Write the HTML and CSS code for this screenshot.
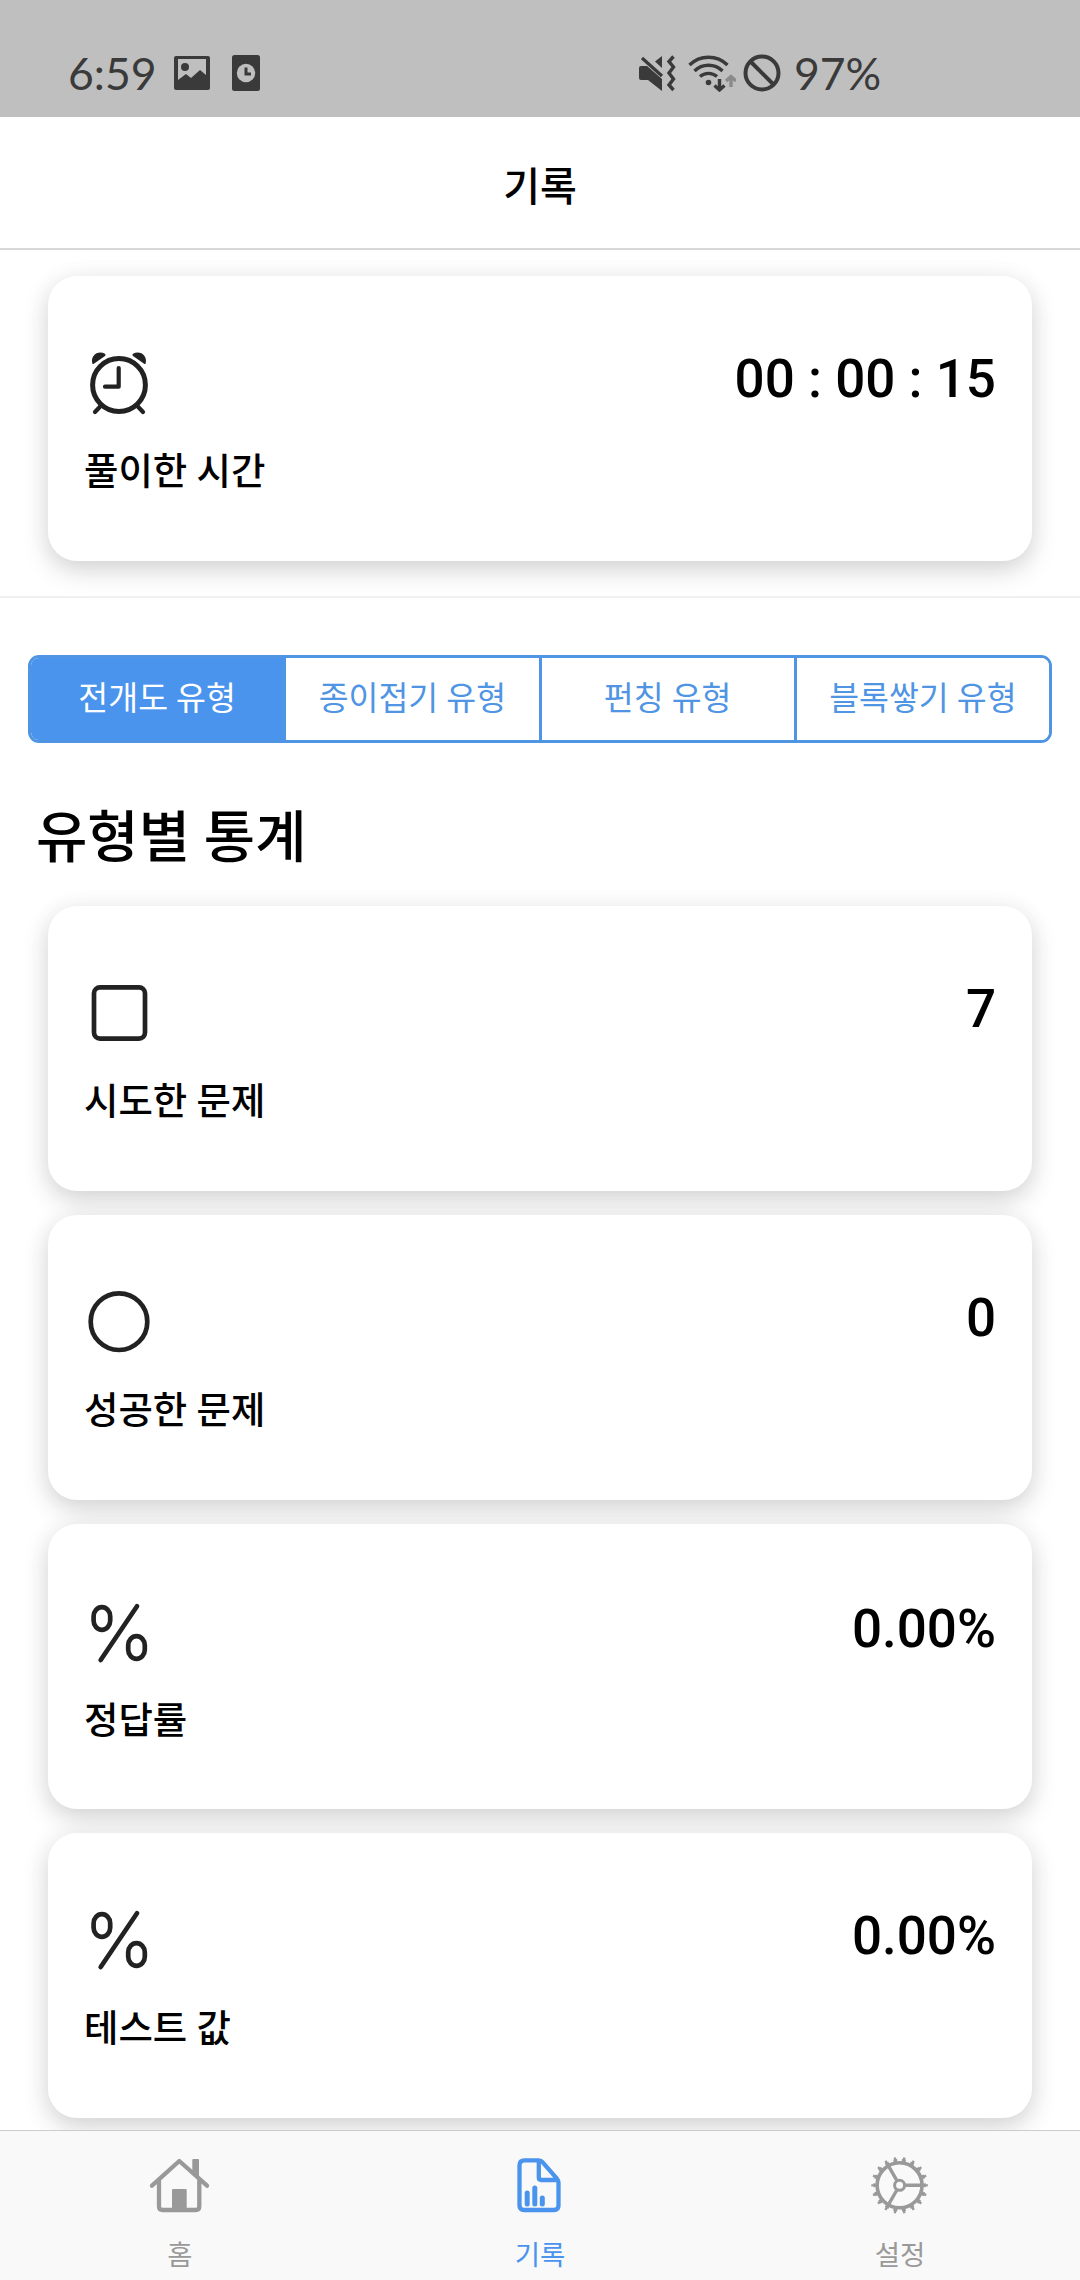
FILE: index.html
```html
<!DOCTYPE html>
<html lang="ko">
<head>
<meta charset="utf-8">
<title>기록</title>
<link rel="stylesheet" href="styles.css">
</head>
<body>
<div class="screen">
  <div class="status">
    <div class="status-left">
      <span class="clock">6:59</span>
      <svg class="photo" width="36" height="34" viewBox="0 0 36 34"><path fill="#3a3a3a" fill-rule="evenodd" d="M2 0h32a2 2 0 0 1 2 2v30a2 2 0 0 1-2 2H2a2 2 0 0 1-2-2V2a2 2 0 0 1 2-2zM4 3v21l8-6 5 4 9-8 6 5V3z"/><circle cx="11" cy="11" r="4" fill="#3a3a3a"/></svg>
      <svg class="alarm" width="28" height="36" viewBox="0 0 28 36"><rect width="28" height="36" rx="2.5" fill="#3a3a3a"/><circle cx="14" cy="18" r="9.2" fill="#bfbfbf"/><path d="M14 12.500v6.500h5" fill="none" stroke="#3a3a3a" stroke-width="3"/></svg>
    </div>
    <div class="status-right">
      <svg width="37" height="38" viewBox="0 0 37 38" fill="#3a3a3a"><path d="M2 12h6l15 13v12L9 26H2a2 2 0 0 1-2-2V14a2 2 0 0 1 2-2zM23 2v12l-7-6.500z"/><path d="M3 4l20 18" stroke="#3a3a3a" stroke-width="3.200"/><path d="M34.500 2.500l-4.500 5 4.500 5.500-4.500 6 4.500 6-4.500 6 4.500 5" fill="none" stroke="#3a3a3a" stroke-width="3.400"/></svg>
      <svg class="wifi" width="48" height="38" viewBox="0 0 48 38" fill="none" stroke="#3a3a3a" stroke-width="3.400"><path d="M1.500 11a27 27 0 0 1 38 0M6.500 17a20 20 0 0 1 28 0M12 22.500a13 13 0 0 1 17 0"/><circle cx="20.500" cy="28.500" r="2.800" fill="#3a3a3a" stroke="none"/><path d="M31.500 25v11M26.500 31.500l5 4.500 5-4.500"/><path stroke="#8a8a8a" d="M43 33V22.500M38 27l5-4.500 5 4.500"/></svg>
      <svg class="block" width="38" height="38" viewBox="0 0 38 38" fill="none" stroke="#3a3a3a" stroke-width="4"><circle cx="19" cy="19" r="16.500"/><path d="M7.500 7.500l23 23"/></svg>
      <span class="battery">97%</span>
    </div>
  </div>
  <header class="header"><h1>기록</h1></header>

  <main class="content">
    <section class="total">
      <article class="card">
        <div class="card-row">
          <svg class="icon" viewBox="0 0 70 70"><circle cx="35" cy="37" r="26.400" stroke-width="5"/><path stroke-width="4.200" d="M34.700 20v18.700H21M16.700 58 11 64M53.300 58l5.700 6"/><path class="solid" d="M8.300 15.200C6.500 8 13.500 2 21 5.800q1.300 1.200 0 2.200L9.500 16q-1 .3-1.200-.8zM61.700 15.200C63.500 8 56.500 2 49 5.800q-1.300 1.200 0 2.200l11.500 8q1 .3 1.200-.8z"/></svg>
          <span class="value">00 : 00 : 15</span>
        </div>
        <p class="label">풀이한 시간</p>
      </article>
    </section>

    <nav class="segments">
      <button class="segment active">전개도 유형</button>
      <button class="segment">종이접기 유형</button>
      <button class="segment">펀칭 유형</button>
      <button class="segment">블록쌓기 유형</button>
    </nav>

    <h2 class="title">유형별 통계</h2>

    <section class="list">
      <article class="card">
        <div class="card-row">
          <svg class="icon" viewBox="0 0 70 70"><rect x="10" y="9.300" width="51" height="51.300" rx="6"/></svg>
          <span class="value">7</span>
        </div>
        <p class="label">시도한 문제</p>
      </article>
      <article class="card">
        <div class="card-row">
          <svg class="icon" viewBox="0 0 70 70"><circle cx="35" cy="34.700" r="28.300"/></svg>
          <span class="value">0</span>
        </div>
        <p class="label">성공한 문제</p>
      </article>
      <article class="card rate">
        <div class="card-row">
          <svg class="icon" viewBox="0 0 70 70"><rect x="9.600" y="9.200" width="16.600" height="22.600" rx="8.300" ry="9"/><rect x="44.200" y="38.200" width="16.600" height="22.600" rx="8.300" ry="9"/><path d="M53 8.300 16.700 62"/></svg>
          <span class="value">0.00%</span>
        </div>
        <p class="label">정답률</p>
      </article>
      <article class="card">
        <div class="card-row">
          <svg class="icon" viewBox="0 0 70 70"><rect x="9.600" y="9.200" width="16.600" height="22.600" rx="8.300" ry="9"/><rect x="44.200" y="38.200" width="16.600" height="22.600" rx="8.300" ry="9"/><path d="M53 8.300 16.700 62"/></svg>
          <span class="value">0.00%</span>
        </div>
        <p class="label">테스트 값</p>
      </article>
    </section>
  </main>

  <nav class="tabs">
    <a class="tab">
      <svg viewBox="0 0 70 70"><path d="M7 35.700 34.300 11 62 35.700M14 30v26.500q0 3.500 3.500 3.500h33.300q3.500 0 3.500-3.500V30"/><path class="fill" d="M28 39h12.700q1 0 1 1v20H27V40q0-1 1-1zM48.300 9H53q1 0 1 1v20l-6.700-6V10q0-1 1-1z"/></svg>
      <span>홈</span>
    </a>
    <a class="tab active">
      <svg viewBox="0 0 70 70"><path d="M19.500 10.300h14.200q2.500 0 4 2l14 16q1.800 2 1.800 4.500v22.700q0 4.500-4.500 4.500H19q-4.500 0-4.500-4.500V15.300q0-5 5-5zM33.800 11v16.500q0 2.500 2.500 2.500H52"/><path stroke-width="5" d="M22.200 43v11M29.800 38v16M37.300 48v6"/></svg>
      <span>기록</span>
    </a>
    <a class="tab">
      <svg viewBox="0 0 70 70"><g transform="translate(34.600 35.300)"><circle r="22.500" stroke-width="3.600"/><circle r="25" stroke-width="2.600" pathLength="36" stroke-dasharray="0.9 1.1" stroke-dashoffset="0.45"/><circle r="27" stroke-width="2.400" pathLength="36" stroke-dasharray="0.5 1.5" stroke-dashoffset="0.25"/><circle r="5" stroke-width="3"/><path stroke-width="3.400" stroke-linecap="butt" d="M6 0h16M-3-5.200l-8-13.900M-3 5.200l-8 13.900"/></g></svg>
      <span>설정</span>
    </a>
  </nav>
</div>
</body>
</html>
```
FILE: styles.css
```css
* { box-sizing: border-box; margin: 0; padding: 0; }

body {
  background: #fff;
  color: #000;
  font-family: Roboto, "Noto Sans CJK KR", sans-serif;
}

.screen {
  width: 1080px;
  height: 2280px;
  display: flex;
  flex-direction: column;
  overflow: hidden;
}

.status {
  height: 117px;
  flex: none;
  padding: 29px 196px 0 68px;
  display: flex;
  justify-content: space-between;
  background: #bfbfbf;
  color: #3a3a3a;
  font: 400 44.500px/87px Lato, sans-serif;
}
.status-left, .status-right { display: flex; align-items: center; height: 88px; }
.clock { width: 106px; height: 88px; white-space: nowrap; }
.alarm { margin-left: 22px; }
.wifi { margin-left: 12px; }
.block { margin-left: 7px; }
.battery { margin-left: 13px; width: 90px; height: 88px; white-space: nowrap; }

.header {
  height: 133px;
  flex: none;
  display: flex;
  justify-content: center;
  align-items: center;
  padding-top: 11px;
  background: #fff;
  border-bottom: 2px solid #d8d8d8;
}
.header h1 { font-size: 40px; font-weight: 500; line-height: 60px; }

.content { flex: 1; min-height: 0; overflow: hidden; }

.total { padding: 26px 48px 35px; border-bottom: 2px solid #f0f0f0; }

.card {
  height: 285px;
  padding: 72px 36px 0;
  border-radius: 29px;
  background: #fff;
  box-shadow: 0 0 28px rgba(0, 0, 0, .03), 0 9px 26px rgba(0, 0, 0, .17);
}
.card.rate { padding-top: 74px; }
.card-row { display: flex; justify-content: space-between; height: 70px; }
.value { font-size: 53px; font-weight: 500; line-height: 62px; white-space: pre; }
.label { margin-top: 26px; font-size: 37.400px; font-weight: 500; line-height: 56px; }
.rate .label { margin-top: 25px; }
.icon {
  width: 70px;
  height: 70px;
  fill: none;
  stroke: #222;
  stroke-width: 4.700px;
  stroke-linecap: round;
  stroke-linejoin: round;
}
.icon [stroke-width="5"] { stroke-width: 5px; }
.icon .solid { fill: #222; stroke: none; }

.segments {
  display: flex;
  height: 88px;
  margin: 57px 28px 0;
  border: 3px solid #4f95e3;
  border-radius: 11px;
  overflow: hidden;
}
.segment {
  flex: 1;
  border: 0;
  background: #fff;
  color: #4f95e3;
  font: 400 32.500px/82px Roboto, "Noto Sans CJK KR", sans-serif;
}
.segment + .segment { border-left: 3px solid #4f95e3; }
.segment.active { background: #4a94ed; color: #fff; }

.title { margin: 53px 36px 0; font-size: 55.800px; font-weight: 500; line-height: 84px; }

.list { display: flex; flex-direction: column; gap: 24px; padding: 26px 48px 0; }

.tabs {
  display: flex;
  flex: none;
  height: 150px;
  border-top: 1px solid #ccc;
  background: #f9f9f9;
}
.tab {
  flex: 1;
  display: flex;
  flex-direction: column;
  align-items: center;
  padding-top: 19px;
  color: #999;
  font-size: 27.500px;
  line-height: 40px;
}
.tab.active { color: #4a94ed; }
.tab svg {
  width: 70px;
  height: 70px;
  fill: none;
  stroke: currentColor;
  stroke-width: 4.300px;
  stroke-linecap: round;
  stroke-linejoin: round;
}
.tab svg [stroke-dasharray] { stroke-linecap: butt; stroke-width: 2.600px; }
.tab svg .fill { fill: currentColor; stroke: none; }
.tab span { margin-top: 16px; }
```
